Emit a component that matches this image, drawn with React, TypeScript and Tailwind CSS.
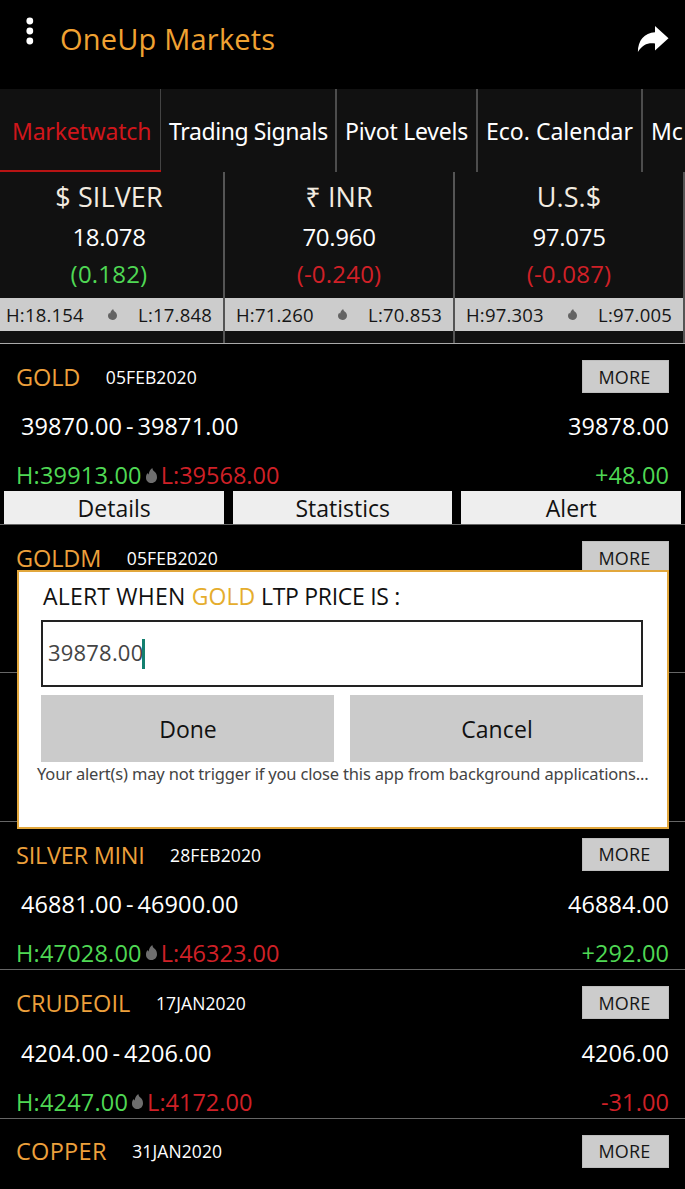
import type { ReactNode } from "react";

type Trend = "up" | "down";

const trendColor: Record<Trend, string> = {
  up: "text-[#4fd854]",
  down: "text-[#cf2027]",
};

function Drop({ className }: { className: string }) {
  return (
    <svg viewBox="0 0 11 15" className={className} fill="currentColor" preserveAspectRatio="none" aria-hidden="true">
      <path d="M6.300 0C6.500 2 7.800 3 8.900 4.100 10.300 5.500 11 7.200 11 9.200 11 12.600 8.600 15 5.500 15S0 12.800 0 9.700C0 7.900.600 6.400 1.500 5.100c.200.700.500 1.100 1 1.300C3.200 4 4.100 1.500 6.300 0Z" />
    </svg>
  );
}

function Header() {
  return (
    <header className="flex h-[89px] shrink-0 items-start bg-black">
      <svg viewBox="0 0 8 28" className="mt-[17px] ml-[26px] h-7 w-2" fill="#fff" aria-hidden="true">
        <circle cx="3.800" cy="4" r="3.400" />
        <circle cx="3.800" cy="14" r="3.400" />
        <circle cx="3.800" cy="24" r="3.400" />
      </svg>
      <h1 className="mt-[19px] ml-[26px] text-[29px] leading-[40px] tracking-[0.2px] text-[#f0a232]">OneUp Markets</h1>
      <svg viewBox="0 0 32 28" className="mt-[25px] mr-4 ml-auto h-7 w-8" fill="#fff" aria-hidden="true">
        <path d="M18 1 31.500 13.200 18 25.500V18.500C10.500 17.700 5.500 19.700.900 27 .800 15.500 7.500 7.700 18 7.200Z" />
      </svg>
    </header>
  );
}

function Tab({ className, children }: { className: string; children: ReactNode }) {
  return (
    <div className={`flex h-full shrink-0 items-center whitespace-nowrap pt-0.5 text-[23px] leading-none ${className}`}>
      {children}
    </div>
  );
}

function Tabs() {
  return (
    <nav className="flex h-[83px] shrink-0 overflow-hidden bg-[#111111] text-white">
      <div className="flex h-full w-[161px] shrink-0 flex-col border-r border-[#444]">
        <Tab className="pl-3 tracking-[-0.2px] text-[#d0161b]">Marketwatch</Tab>
        <div className="-mt-[2px] -mr-px h-[3px] shrink-0 bg-[#b81414]" />
      </div>
      <Tab className="w-[176px] border-r-2 border-[#4d4d4d] pl-2 tracking-[-0.4px]">Trading Signals</Tab>
      <Tab className="w-[141px] border-r-2 border-[#4d4d4d] pl-2 tracking-[-0.25px]">Pivot Levels</Tab>
      <Tab className="w-[165px] border-r-2 border-[#4d4d4d] pl-2">Eco. Calendar</Tab>
      <Tab className="pl-2">Mc</Tab>
    </nav>
  );
}

interface Quote {
  name: string;
  value: string;
  change: string;
  trend: Trend;
  high: string;
  low: string;
}

const quotes: Quote[] = [
  { name: "$ SILVER", value: "18.078", change: "(0.182)", trend: "up", high: "H:18.154", low: "L:17.848" },
  { name: "₹ INR", value: "70.960", change: "(-0.240)", trend: "down", high: "H:71.260", low: "L:70.853" },
  { name: "U.S.$", value: "97.075", change: "(-0.087)", trend: "down", high: "H:97.303", low: "L:97.005" },
];

function QuoteCard({ quote, first }: { quote: Quote; first: boolean }) {
  return (
    <div className={`${first ? "w-[225px]" : "w-[230px]"} flex shrink-0 flex-col border-r-2 border-[#555]`}>
      <div className={`flex flex-col items-center ${first ? "pr-[5px]" : ""}`}>
        <div className="mt-2 h-[34px] text-[27px] leading-[34px] tracking-[0.1px] text-[#f3ece0]">{quote.name}</div>
        <div className="mt-[5px] h-9 text-[24px] leading-9 tracking-[-0.3px] text-white">{quote.value}</div>
        <div className={`h-[38px] text-[24px] leading-[38px] tracking-[0.2px] ${trendColor[quote.trend]}`}>{quote.change}</div>
      </div>
      <div
        className={`mt-[5px] flex h-[33px] items-center justify-between bg-[#cccccc] pr-[11px] text-[18.5px] tracking-[0.2px] text-[#161616] ${first ? "pl-[6px]" : "pl-[11px]"}`}
      >
        <span>{quote.high}</span>
        <Drop className="-mr-[3px] h-[11px] w-[9px] text-[#636363]" />
        <span>{quote.low}</span>
      </div>
    </div>
  );
}

interface Commodity {
  name: string;
  nameClass: string;
  date: string;
  bidAsk?: string;
  last?: string;
  high?: string;
  low?: string;
  change?: string;
  trend?: Trend;
  expanded?: boolean;
}

const commodities: Commodity[] = [
  { name: "GOLD", nameClass: "tracking-[-0.1px]", date: "05FEB2020", bidAsk: "39870.00 - 39871.00", last: "39878.00", high: "H:39913.00", low: "L:39568.00", change: "+48.00", trend: "up", expanded: true },
  { name: "GOLDM", nameClass: "tracking-[-0.1px]", date: "05FEB2020" },
  { name: "", nameClass: "", date: "" },
  { name: "SILVER MINI", nameClass: "tracking-[-0.25px]", date: "28FEB2020", bidAsk: "46881.00 - 46900.00", last: "46884.00", high: "H:47028.00", low: "L:46323.00", change: "+292.00", trend: "up" },
  { name: "CRUDEOIL", nameClass: "tracking-[0.1px]", date: "17JAN2020", bidAsk: "4204.00 - 4206.00", last: "4206.00", high: "H:4247.00", low: "L:4172.00", change: "-31.00", trend: "down" },
  { name: "COPPER", nameClass: "tracking-[0.3px]", date: "31JAN2020" },
];

function CommodityRow({ item }: { item: Commodity }) {
  return (
    <section className={`${item.expanded ? "h-[181px]" : "h-[148.4px]"} shrink-0 border-b border-[#666] pt-4`}>
      {item.name && (
        <div className="flex h-[33px] items-center pr-4 pl-4">
          <span className={`pt-0.5 text-[23.5px] text-[#eda03c] ${item.nameClass}`}>{item.name}</span>
          <span className="ml-[25.5px] pt-px text-[17.5px] tracking-[0.1px] text-white">{item.date}</span>
          <button className="ml-auto h-[33px] w-[87px] border border-[#bdbdbd] bg-[#cccccc] pr-[2px] text-[18px] leading-none tracking-[0.2px] text-[#161616]">
            MORE
          </button>
        </div>
      )}
      {item.bidAsk && (
        <>
          <div className="mt-[18px] flex h-8 items-center justify-between pr-4 pl-[21px] text-[23.5px] tracking-[0.1px] text-white">
            <span className="[word-spacing:-2.3px]">{item.bidAsk}</span>
            <span>{item.last}</span>
          </div>
          <div className="mt-[17px] flex h-8 items-center pr-4 pl-4 text-[23.5px] tracking-[0.1px]">
            <span className={`tracking-[0.2px] ${trendColor.up}`}>{item.high}</span>
            <Drop className="mb-[2px] ml-1 h-[15px] w-[11px] text-[#6e6e6e]" />
            <span className={`ml-[4px] tracking-[0px] ${trendColor.down}`}>{item.low}</span>
            <span className={`ml-auto ${trendColor[item.trend ?? "up"]}`}>{item.change}</span>
          </div>
        </>
      )}
      {item.expanded && (
        <div className="-mt-px flex h-[33px] gap-[9px] pr-1 pl-[4.400px] text-[23px] text-[#111]">
          {["Details", "Statistics", "Alert"].map((label) => (
            <button key={label} className="flex-1 bg-[#eeeeee] pt-0.5 leading-none">
              {label}
            </button>
          ))}
        </div>
      )}
    </section>
  );
}

function AlertDialog() {
  return (
    <div
      role="dialog"
      className="absolute top-[570px] left-[17px] flex h-[259px] w-[652px] flex-col border-2 border-[#e2a73c] bg-white pr-6 pl-[22px]"
    >
      <h2 className="mt-[6px] h-9 whitespace-pre pl-[2px] text-[23px] leading-9 tracking-[0.2px] text-[#111]">
        ALERT WHEN <span className="tracking-[0.1px] text-[#e5ad2d]">GOLD</span>
        <span className="tracking-[-0.3px]"> LTP PRICE IS :</span>
      </h2>
      <div className="mt-[6px] flex h-[67px] shrink-0 items-center border-2 border-[#222] pl-[5px]">
        <span className="pb-0.5 text-[22px] tracking-[0.2px] text-[#444]">39878.00</span>
        <span className="-ml-px h-[30px] w-[3px] bg-[#13806f]" />
      </div>
      <div className="mt-2 flex h-[67px] shrink-0 gap-4 text-[23px] text-[#111]">
        <button className="flex-1 bg-[#cbcbcb] pt-px pl-px">Done</button>
        <button className="flex-1 bg-[#cbcbcb] pt-px pl-px tracking-[0.1px]">Cancel</button>
      </div>
      <p className="-ml-[4px] text-[16.5px] leading-6 tracking-[-0.18px] whitespace-nowrap text-[#444] font-['Noto_Sans','Open_Sans',sans-serif]">
        Your alert(s) may not trigger if you close this app from background applications...
      </p>
    </div>
  );
}

export default function App() {
  return (
    <main className="relative flex h-[1189px] w-[685px] flex-col overflow-hidden bg-black font-['Open_Sans','Noto_Sans',sans-serif]">
      <Header />
      <div className="contents font-['Noto_Sans','Open_Sans',sans-serif]">
        <Tabs />
      </div>
      <div className="flex h-[172px] shrink-0 border-b border-[#aaa] bg-[#111111]">
        {quotes.map((quote, index) => (
          <QuoteCard key={quote.name} quote={quote} first={index === 0} />
        ))}
      </div>
      {commodities.map((item, index) => (
        <CommodityRow key={index} item={item} />
      ))}
      <AlertDialog />
    </main>
  );
}
